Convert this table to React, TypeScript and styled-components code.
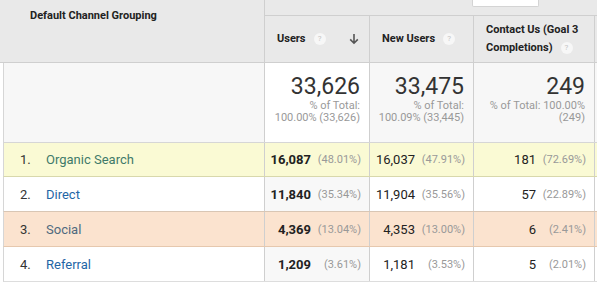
import React from "react";
import styled, { createGlobalStyle } from "styled-components";

const GlobalStyle = createGlobalStyle`
  html, body {
    margin: 0;
    padding: 0;
    background: #fff;
    font-family: Roboto, "Liberation Sans", Arial, sans-serif;
  }
`;

const HEAD_COLS = "265px 105px 104px 121px 2px";
const BODY_COLS = "261px 105px 104px 121px 2px";

const Table = styled.div`
  width: 597px;
  color: #222;
`;

const HeaderGrid = styled.div`
  display: grid;
  grid-template-columns: ${HEAD_COLS};
  grid-template-rows: 16px 46px;
  background: #e9e9e9;
  border-bottom: 1px solid #cfcfcf;
`;

const GroupingHead = styled.div`
  grid-row: 1 / span 2;
  border-right: 1px solid #cfcfcf;
  padding: 9px 0 0 30px;
  font-size: 11px;
  font-weight: 700;
  color: #222;
`;

const Toolbar = styled.div`
  grid-column: 2 / span 4;
  border-bottom: 1px solid #cfcfcf;
  display: flex;
  padding-left: 207px;
`;

const ToolButton = styled.div`
  width: 65px;
  height: 6px;
  background: #fff;
  border: 1px solid #d4d4d4;
  border-top: none;
  border-radius: 0 0 2px 2px;
`;

const ColHead = styled.div<{ $last?: boolean }>`
  border-right: ${({ $last }) => ($last ? "none" : "1px solid #cfcfcf")};
  display: flex;
  align-items: center;
  padding: 0 8px 0 12px;
  font-size: 11px;
  font-weight: 700;
  line-height: 18px;
  color: #222;
`;

const HeadLabel = styled.span`
  flex: 1;
`;

const Help = styled.span`
  display: inline-flex;
  align-items: center;
  justify-content: center;
  width: 12px;
  height: 12px;
  border-radius: 50%;
  background: #f7f7f7;
  color: #c4c4c4;
  font-size: 8px;
  font-weight: 400;
  line-height: 12px;
  margin-left: 8px;
  vertical-align: middle;
`;

const SortArrow = styled.svg`
  margin-right: 2px;
`;

const Row = styled.div<{ $bg: string; $border: string; $height: number }>`
  display: grid;
  grid-template-columns: ${BODY_COLS};
  height: ${({ $height }) => $height}px;
  background: ${({ $bg }) => $bg};
  border-bottom: 1px solid ${({ $border }) => $border};
  box-sizing: border-box;
  margin-left: 3px;
  border-left: 1px solid #d6d6d6;
`;

const NameCell = styled.div`
  border-right: 1px solid #cfcfcf;
  display: flex;
  align-items: center;
  font-size: 13px;
`;

const Index = styled.span`
  width: 26px;
  padding-left: 16px;
  color: #333;
`;

const Channel = styled.span<{ $color: string }>`
  color: ${({ $color }) => $color};
`;

const ValueCell = styled.div<{ $tint?: string; $last?: boolean }>`
  border-right: ${({ $last }) => ($last ? "none" : "1px solid #cfcfcf")};
  background: ${({ $tint }) => $tint || "transparent"};
  display: grid;
  grid-template-columns: 1fr 50px;
  align-items: center;
  padding-right: 8px;
  font-size: 13px;
`;

const Num = styled.span<{ $bold?: boolean }>`
  text-align: right;
  font-weight: ${({ $bold }) => ($bold ? 700 : 400)};
  color: #222;
`;

const Pct = styled.span`
  text-align: right;
  font-size: 11px;
  color: #999;
`;

const TotalCell = styled.div<{ $tint?: string; $last?: boolean }>`
  border-right: ${({ $last }) => ($last ? "none" : "1px solid #cfcfcf")};
  background: ${({ $tint }) => $tint || "transparent"};
  text-align: right;
  white-space: nowrap;
  padding: 11px 9px 0 2px;
`;

const Total = styled.div`
  font-size: 23px;
  line-height: 26px;
  color: #333;
`;

const TotalNote = styled.div`
  font-size: 11px;
  line-height: 12px;
  color: #999;
`;

const SummaryLeft = styled.div`
  border-right: 1px solid #cfcfcf;
  background: #f7f7f7;
`;

type Cell = { n: string; p: string };
type DataRow = {
  idx: number;
  name: string;
  users: Cell;
  newUsers: Cell;
  goal: Cell;
  bg: string;
  border: string;
  color: string;
  sortTint?: string;
  height: number;
};

const rows: DataRow[] = [
  {
    idx: 1,
    name: "Organic Search",
    users: { n: "16,087", p: "(48.01%)" },
    newUsers: { n: "16,037", p: "(47.91%)" },
    goal: { n: "181", p: "(72.69%)" },
    bg: "#fafad4",
    border: "#d8d8ac",
    color: "#3f7a6a",
    height: 34,
  },
  {
    idx: 2,
    name: "Direct",
    users: { n: "11,840", p: "(35.34%)" },
    newUsers: { n: "11,904", p: "(35.56%)" },
    goal: { n: "57", p: "(22.89%)" },
    bg: "#ffffff",
    border: "#d9c6b4",
    color: "#1f66a6",
    sortTint: "#f8f8f8",
    height: 35,
  },
  {
    idx: 3,
    name: "Social",
    users: { n: "4,369", p: "(13.04%)" },
    newUsers: { n: "4,353", p: "(13.00%)" },
    goal: { n: "6", p: "(2.41%)" },
    bg: "#fbe3cf",
    border: "#e6c8ae",
    color: "#4f6a7e",
    height: 35,
  },
  {
    idx: 4,
    name: "Referral",
    users: { n: "1,209", p: "(3.61%)" },
    newUsers: { n: "1,181", p: "(3.53%)" },
    goal: { n: "5", p: "(2.01%)" },
    bg: "#ffffff",
    border: "#dddddd",
    color: "#1f66a6",
    sortTint: "#f8f8f8",
    height: 35,
  },
];

const App: React.FC = () => {
  return (
    <Table>
      <GlobalStyle />
      <HeaderGrid>
        <GroupingHead>Default Channel Grouping</GroupingHead>
        <Toolbar>
          <ToolButton />
        </Toolbar>
        <ColHead>
          <HeadLabel>
            Users<Help>?</Help>
          </HeadLabel>
          <SortArrow width="10" height="12" viewBox="0 0 10 12">
            <path d="M5 1v9M1.2 6.4L5 10.2l3.8-3.8" fill="none" stroke="#555" strokeWidth="1.6" />
          </SortArrow>
        </ColHead>
        <ColHead>
          <HeadLabel>
            New Users<Help>?</Help>
          </HeadLabel>
        </ColHead>
        <ColHead>
          <HeadLabel>
            Contact Us (Goal 3 Completions)<Help>?</Help>
          </HeadLabel>
        </ColHead>
        <ColHead $last />
      </HeaderGrid>

      <Row $bg="#f7f7f7" $border="#d6d6d6" $height={80}>
        <SummaryLeft />
        <TotalCell $tint="#ffffff">
          <Total>33,626</Total>
          <TotalNote>% of Total:</TotalNote>
          <TotalNote>100.00% (33,626)</TotalNote>
        </TotalCell>
        <TotalCell>
          <Total>33,475</Total>
          <TotalNote>% of Total:</TotalNote>
          <TotalNote>100.09% (33,445)</TotalNote>
        </TotalCell>
        <TotalCell>
          <Total>249</Total>
          <TotalNote>% of Total: 100.00%</TotalNote>
          <TotalNote>(249)</TotalNote>
        </TotalCell>
        <TotalCell $last />
      </Row>

      {rows.map((r) => (
        <Row key={r.idx} $bg={r.bg} $border={r.border} $height={r.height}>
          <NameCell>
            <Index>{r.idx}.</Index>
            <Channel $color={r.color}>{r.name}</Channel>
          </NameCell>
          <ValueCell $tint={r.sortTint}>
            <Num $bold>{r.users.n}</Num>
            <Pct>{r.users.p}</Pct>
          </ValueCell>
          <ValueCell>
            <Num>{r.newUsers.n}</Num>
            <Pct>{r.newUsers.p}</Pct>
          </ValueCell>
          <ValueCell>
            <Num>{r.goal.n}</Num>
            <Pct>{r.goal.p}</Pct>
          </ValueCell>
          <ValueCell $last />
        </Row>
      ))}
    </Table>
  );
};

export default App;
